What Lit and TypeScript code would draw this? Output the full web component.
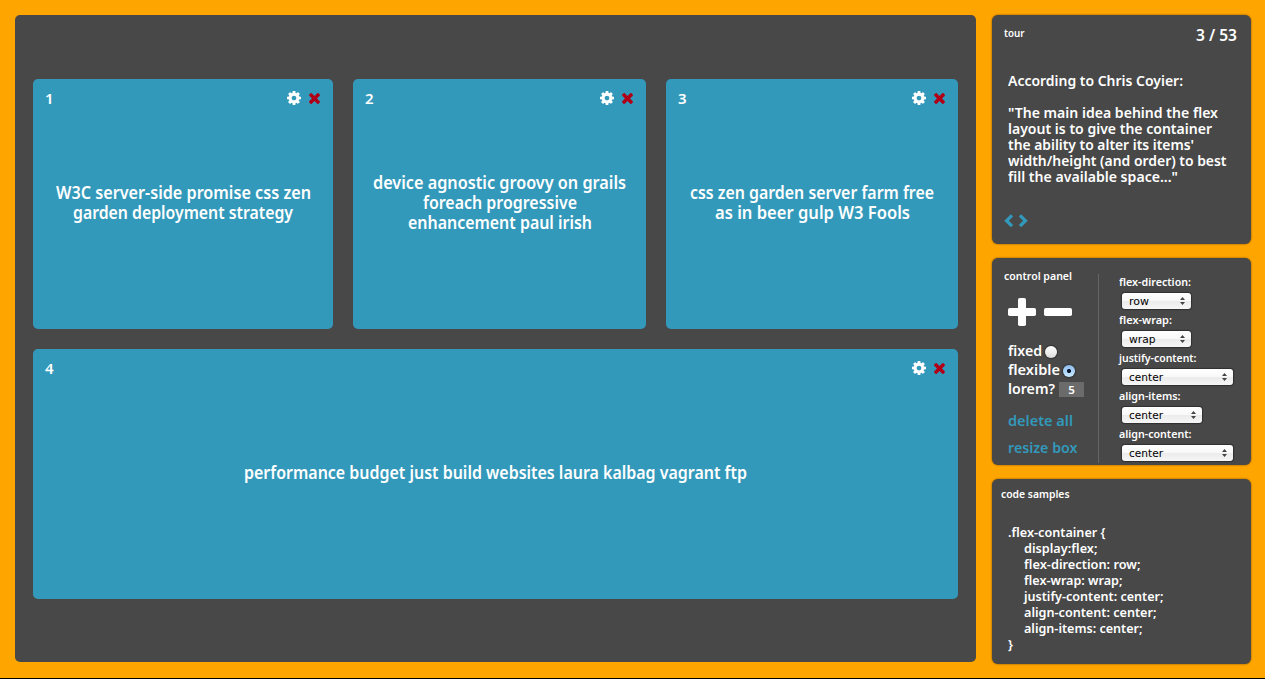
import { LitElement, html, css, svg } from "lit";
import { customElement, property, state, query } from "lit/decorators.js";

type Line = [text: string, width: number];

/** One line of text, condensed horizontally to the given measure. */
@customElement("fit-line")
class FitLine extends LitElement {
  @property() text = "";
  @property({ type: Number }) measure = 0;
  @state() private ratio = 1;
  @query(".ink") private ink!: HTMLElement;

  static styles = css`
    :host { display: block; white-space: pre; }
    .box { display: block; }
    .ink { display: inline-block; transform-origin: 0 50%; }
  `;

  firstUpdated() {
    const natural = this.ink.getBoundingClientRect().width;
    if (natural && this.measure) this.ratio = this.measure / natural;
  }

  render() {
    return html`<span class="box" style="width:${this.measure}px"
      ><span class="ink" style="transform:scaleX(${this.ratio})">${this.text}</span></span>`;
  }
}

const fit = (l: Line) => html`<fit-line .text=${l[0]} .measure=${l[1]}></fit-line>`;

const gear = svg`<svg class="gear" viewBox="0 0 1536 1536"><path fill="#fff" d="M1024 768q0-106-75-181t-181-75-181 75-75 181 75 181 181 75 181-75 75-181zm512-109v222q0 12-8 23t-20 13l-185 28q-19 54-39 91 35 50 107 138 10 12 10 25t-9 23q-27 37-99 108t-94 71q-12 0-26-9l-138-108q-44 23-91 38-16 136-29 186-7 28-36 28H657q-14 0-24.500-8.500T621 1506l-28-184q-49-16-90-37l-141 107q-10 9-25 9-14 0-25-11-126-114-165-168-7-10-7-23 0-12 8-23 15-21 51-66.500t54-70.500q-27-50-41-99L29 913q-13-2-21-12.500T0 877V655q0-12 8-23t19-13l186-28q14-46 39-92-40-57-107-138-10-12-10-24 0-10 9-23 26-36 98.500-107.500T337 135q13 0 26 10l138 107q44-23 91-38 16-136 29-186 7-28 36-28h222q14 0 24.500 8.500T915 30l28 184q49 16 90 37l142-107q9-9 24-9 13 0 25 10 129 119 165 170 7 8 7 22 0 12-8 23-15 21-51 66.500t-54 70.500q26 50 41 98l183 28q13 2 21 12.500t8 23.500z"/></svg>`;

const cross = svg`<svg class="cross" viewBox="0 0 1188 1188"><path fill="#b00018" d="M1188 956q0 40-28 68l-136 136q-28 28-68 28t-68-28L594 866 300 1160q-28 28-68 28t-68-28L28 1024Q0 996 0 956t28-68l294-294L28 300Q0 272 0 232t28-68L164 28Q192 0 232 0t68 28l294 294L888 28q28-28 68-28t68 28l136 136q28 28 28 68t-28 68L866 594l294 294q28 28 28 68z"/></svg>`;

interface Card { size: string; lines: Line[]; }
const cards: Card[] = [
  { size: "c1", lines: [["W3C server-side promise css zen", 255], ["garden deployment strategy", 220]] },
  { size: "c2", lines: [["device agnostic groovy on grails", 253], ["foreach progressive", 154], ["enhancement paul irish", 184]] },
  { size: "c3", lines: [["css zen garden server farm free", 244], ["as in beer gulp W3 Fools", 195]] },
  { size: "c4", lines: [["performance budget just build websites laura kalbag vagrant ftp", 503]] },
];

const quote: Line[] = [
  ["\"The main idea behind the flex", 210],
  ["layout is to give the container", 204],
  ["the ability to alter its items'", 186],
  ["width/height (and order) to best", 218.5],
  ["fill the available space...\"", 170],
];

const selects: { label: Line; value: Line; size: string }[] = [
  { label: ["flex-direction:", 72], value: ["row", 20], size: "s" },
  { label: ["flex-wrap:", 53], value: ["wrap", 26.5], size: "s" },
  { label: ["justify-content:", 77.5], value: ["center", 34], size: "l" },
  { label: ["align-items:", 61.5], value: ["center", 34], size: "m" },
  { label: ["align-content:", 72.5], value: ["center", 34], size: "l" },
];

const code: Line[] = [
  ["display:flex;", 73.5],
  ["flex-direction: row;", 116.5],
  ["flex-wrap: wrap;", 98.5],
  ["justify-content: center;", 139.5],
  ["align-content: center;", 132.5],
  ["align-items: center;", 118.5],
];

@customElement("app-root")
class AppRoot extends LitElement {
  static styles = css`
    :host {
      display: block; box-sizing: border-box; width: 1265px; height: 679px;
      background: #ffa500; border-bottom: 1px solid #000; overflow: hidden;
      font-family: "Noto Sans", "Open Sans", sans-serif; font-weight: 600; color: #fff;
    }
    svg { display: block; }
    .page { display: flex; gap: 16px; padding: 15px 14px 0 15px; }
    .stage {
      box-sizing: border-box; width: 961px; height: 647px; padding: 64px 18px 0;
      background: #484848; border-radius: 5px;
      display: flex; flex-wrap: wrap; gap: 20px; align-content: flex-start;
    }
    .card {
      box-sizing: border-box; height: 250px; background: #3399bb; border-radius: 5px;
      display: grid; grid-template-rows: 40px 1fr 43px;
    }
    .c1 { width: 300px; } .c2 { width: 293px; } .c3 { width: 292px; } .c4 { width: 925px; }
    .bar { display: flex; align-items: flex-start; padding: 12px 13.500px 0 12px; }
    .num { font-size: 15px; line-height: 16px; height: 16px; margin-top: -1px; flex: 1; }
    .gear { width: 14px; height: 14px; margin-right: 7.500px; }
    .cross { width: 11px; height: 11px; margin-top: 2px; }
    .words {
      display: flex; flex-direction: column; align-items: center; justify-content: center;
      font-size: 17px; line-height: 20px;
    }
    .side { display: flex; flex-direction: column; gap: 14px; width: 259px; }
    .panel {
      box-sizing: border-box; background: #484848; border-radius: 6px;
      box-shadow: 0 0 2px rgba(0, 0, 0, .6);
    }
    .label { font-size: 11px; line-height: 12px; }
    .tour { height: 229px; padding: 12px 14px 0 12px; }
    .head { display: flex; justify-content: space-between; height: 45px; }
    .head .count { font-size: 15.500px; line-height: 16px; }
    .quote { padding-left: 4px; font-size: 15px; line-height: 16px; }
    .intro { margin-bottom: 16px; }
    .arrows { display: flex; gap: 5px; margin-top: 30px; }
    .arrows svg { width: 10px; height: 14px; }
    .control { height: 207px; display: flex; padding: 12px 0 0 12px; }
    .left { width: 94px; height: 189px; margin-top: 4px; border-right: 1px solid #666; }
    .left .label { margin-top: -4px; }
    .signs { display: flex; gap: 8px; padding: 16px 0 0 4px; }
    .signs svg { width: 28px; height: 28px; }
    .opts { padding: 15px 0 0 4px; font-size: 15px; line-height: 19px; }
    .row { display: flex; height: 19px; gap: 3px; }
    .radio {
      width: 12px; height: 12px; margin-top: 5px; border-radius: 50%;
      background: linear-gradient(#fff, #dcdcdc); box-shadow: 0 0 1px 1px #333;
    }
    .on { background: radial-gradient(circle, #0b1a30 0 1.600px, transparent 2.400px), linear-gradient(#8fbcf0, #c9ebff); }
    .amount {
      width: 25px; height: 15px; background: #6b6b6b; margin: 3px 0 0 1px;
      font-size: 11.500px; line-height: 16px; text-align: center;
    }
    .links { padding: 12px 0 0 4px; font-size: 15px; line-height: 20px; color: #3399bb; }
    .links fit-line { margin-bottom: 7px; }
    .right { padding: 6px 0 0 20px; }
    .field { height: 38px; }
    .select {
      box-sizing: border-box; height: 16px; margin: 5px 0 0 3px; padding: 0 6px 0 7px;
      display: flex; justify-content: space-between; align-items: center; border-radius: 3px;
      background: linear-gradient(#fff, #f8f8f8 50%, #ebebeb 51%, #f6f6f6);
      box-shadow: 0 0 1px 1px rgba(0, 0, 0, .35);
      font: 400 11px/16px "DejaVu Sans", sans-serif; color: #000;
    }
    .select fit-line { padding-top: 1px; }
    .select svg { width: 5px; height: 8px; }
    .s { width: 69px; } .m { width: 80px; } .l { width: 111px; }
    .samples { height: 185px; padding: 9px 0 0 9px; }
    .code { padding: 24px 0 0 7px; font-size: 13px; line-height: 16px; }
    .body { padding-left: 16px; }
  `;

  render() {
    return html`
      <div class="page">
        <main class="stage">
          ${cards.map((c, i) => html`
            <section class="card ${c.size}">
              <div class="bar"><span class="num">${i + 1}</span>${gear}${cross}</div>
              <div class="words">${c.lines.map(fit)}</div>
            </section>`)}
        </main>
        <aside class="side">
          <section class="panel tour">
            <div class="head">
              <div class="label">${fit(["tour", 20.5])}</div>
              <div class="count">${fit(["3 / 53", 41])}</div>
            </div>
            <div class="quote">
              <div class="intro">${fit(["According to Chris Coyier:", 175])}</div>
              ${quote.map(fit)}
            </div>
            <div class="arrows">
              <svg viewBox="0 0 10 14"><path d="M8 1.300 2.600 6.700 8 12.100" fill="none" stroke="#3399bb" stroke-width="3.300"/></svg>
              <svg viewBox="0 0 10 14"><path d="M1 1.300 6.400 6.700 1 12.100" fill="none" stroke="#3399bb" stroke-width="3.300"/></svg>
            </div>
          </section>
          <section class="panel control">
            <div class="left">
              <div class="label">${fit(["control panel", 68])}</div>
              <div class="signs">
                <svg viewBox="0 0 28 28"><rect x="10" width="8" height="28" rx="1.800" fill="#fff"/><rect y="10" width="28" height="8" rx="1.800" fill="#fff"/></svg>
                <svg viewBox="0 0 28 28"><rect y="10" width="28" height="8" rx="1.800" fill="#fff"/></svg>
              </div>
              <div class="opts">
                <div class="row">${fit(["fixed", 34])}<span class="radio"></span></div>
                <div class="row">${fit(["flexible", 52])}<span class="radio on"></span></div>
                <div class="row">${fit(["lorem?", 47])}<span class="amount">5</span></div>
              </div>
              <div class="links">${fit(["delete all", 65])}${fit(["resize box", 69.5])}</div>
            </div>
            <div class="right">
              ${selects.map((s) => html`
                <div class="field">
                  <div class="label">${fit(s.label)}</div>
                  <div class="select ${s.size}">
                    ${fit(s.value)}
                    <svg viewBox="0 0 5 8"><path d="M2.500 0 5 3H0zM2.500 8 0 5h5z" fill="#444"/></svg>
                  </div>
                </div>`)}
            </div>
          </section>
          <section class="panel samples">
            <div class="label">${fit(["code samples", 68.5])}</div>
            <div class="code">
              ${fit([".flex-container {", 97.5])}
              <div class="body">${code.map(fit)}</div>
              ${fit(["}", 5])}
            </div>
          </section>
        </aside>
      </div>`;
  }
}
